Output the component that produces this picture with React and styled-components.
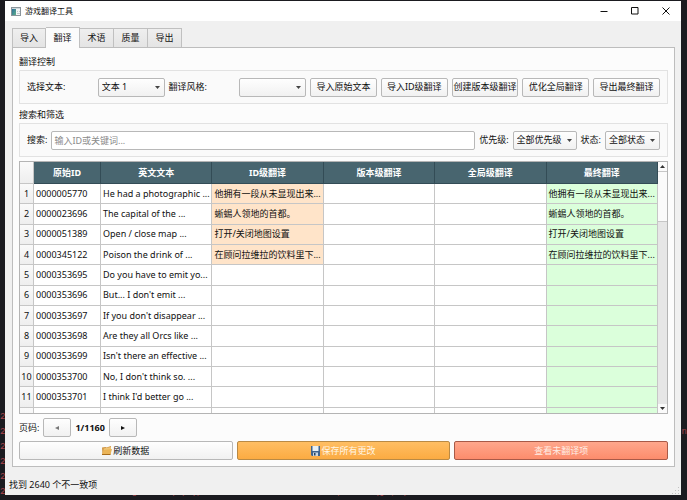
import React from 'react'
import styled, { createGlobalStyle, css } from 'styled-components';

const tabs = ['导入', '翻译', '术语', '质量', '导出'];

const actions = ['导入原始文本', '导入ID级翻译', '创建版本级翻译', '优化全局翻译', '导出最终翻译'];

const columns = ['原始ID', '英文文本', 'ID级翻译', '版本级翻译', '全局级翻译', '最终翻译'];

const rows = [
    { id: '0000005770', text: 'He had a photographic ...', translation: '他拥有一段从未显现出来...' },
    { id: '0000023696', text: 'The capital of the ...', translation: '蜥蜴人领地的首都。' },
    { id: '0000051389', text: 'Open / close map ...', translation: '打开/关闭地图设置' },
    { id: '0000345122', text: 'Poison the drink of ...', translation: '在顾问拉维拉的饮料里下...' },
    { id: '0000353695', text: 'Do you have to emit yo...' },
    { id: '0000353696', text: "But... I don't emit ..." },
    { id: '0000353697', text: "If you don't disappear ..." },
    { id: '0000353698', text: 'Are they all Orcs like ...' },
    { id: '0000353699', text: "Isn't there an effective ..." },
    { id: '0000353700', text: "No, I don't think so. ..." },
    { id: '0000353701', text: "I think I'd better go ..." },
    { id: '', text: '' },
];

const logLine = 'gotobusqu(a(,_200 - 10000 - 数据加载完毕, 3847 (jn, (4';

function App() {
    return (
        <DesktopStyled>
            <GlobalStyle />
            <LogStyled aria-hidden="true">
                <p>2</p>
                <p className="wide"><span>2</span><span>n</span></p>
                <p>2</p>
                <p>2</p>
                <p>2</p>
                <p className="last"><span>2</span><span>{logLine}</span></p>
            </LogStyled>
            <WindowStyled>
                <TitleBar>
                    <AppIcon />
                    <h1>游戏翻译工具</h1>
                    <WindowButton aria-label="最小化">
                        <svg viewBox="0 0 8 8"><path d="M.5 4.5h7" /></svg>
                    </WindowButton>
                    <WindowButton aria-label="最大化">
                        <svg viewBox="0 0 8 8"><path d="M.5 .5h6.500v6.500h-6.500z" /></svg>
                    </WindowButton>
                    <WindowButton aria-label="关闭">
                        <svg viewBox="0 0 8 8"><path d="M.5 .5l7 7M7.500 .5l-7 7" /></svg>
                    </WindowButton>
                </TitleBar>

                <TabBar role="tablist">
                    {tabs.map((tab) => (
                        <Tab key={tab} role="tab" aria-selected={tab === '翻译'} $active={tab === '翻译'}>{tab}</Tab>
                    ))}
                </TabBar>

                <Pane>
                    <GroupTitle>翻译控制</GroupTitle>
                    <ControlGroup>
                        <label htmlFor="text">选择文本:</label>
                        <SelectBox id="text" options={['文本 1']} />
                        <label htmlFor="style">翻译风格:</label>
                        <SelectBox id="style" options={['']} />
                        {actions.map((action) => (
                            <Button key={action}>{action}</Button>
                        ))}
                    </ControlGroup>

                    <GroupTitle>搜索和筛选</GroupTitle>
                    <FilterGroup>
                        <label htmlFor="search">搜索:</label>
                        <SearchInput id="search" type="text" placeholder="输入ID或关键词..." />
                        <label htmlFor="priority">优先级:</label>
                        <SelectBox id="priority" options={['全部优先级']} />
                        <label htmlFor="state">状态:</label>
                        <SelectBox id="state" options={['全部状态']} />
                    </FilterGroup>

                    <TableFrame>
                        <div className="view">
                            <Table>
                                <colgroup>
                                    <col className="num" />
                                    <col className="id" />
                                </colgroup>
                                <thead>
                                    <tr>
                                        <td></td>
                                        {columns.map((column) => <th key={column} scope="col">{column}</th>)}
                                    </tr>
                                </thead>
                                <tbody>
                                    {rows.map((row, index) => (
                                        <tr key={index}>
                                            <th scope="row">{row.id && index + 1}</th>
                                            <Cell>{row.id}</Cell>
                                            <Cell>{row.text}</Cell>
                                            <Cell $tone={row.translation && '#ffe4c9'}>{row.translation}</Cell>
                                            <Cell />
                                            <Cell />
                                            <Cell $tone="#dbffdb">{row.translation}</Cell>
                                        </tr>
                                    ))}
                                </tbody>
                            </Table>
                        </div>
                        <ScrollBar>
                            <button aria-label="向上滚动"><svg viewBox="0 0 5 3"><path d="M0 3L2.500 0L5 3z" /></svg></button>
                            <div className="track"><div className="thumb" /></div>
                            <button aria-label="向下滚动"><svg viewBox="0 0 5 3"><path d="M0 0L2.500 3L5 0z" /></svg></button>
                        </ScrollBar>
                    </TableFrame>

                    <Pager>
                        <span>页码:</span>
                        <PageButton aria-label="上一页" disabled>
                            <svg viewBox="0 0 4 4"><path d="M4 0L0 2L4 4z" /></svg>
                        </PageButton>
                        <strong>1/1160</strong>
                        <PageButton aria-label="下一页">
                            <svg viewBox="0 0 4 4"><path d="M0 0L4 2L0 4z" /></svg>
                        </PageButton>
                    </Pager>

                    <BottomActions>
                        <Button><FolderIcon />刷新数据</Button>
                        <Button $color="orange"><DiskIcon />保存所有更改</Button>
                        <Button $color="red">查看未翻译项</Button>
                    </BottomActions>
                </Pane>

                <StatusBar>
                    <span>找到 2640 个不一致项</span>
                    <SizeGrip />
                </StatusBar>
            </WindowStyled>
        </DesktopStyled>
    )
}

function SelectBox({ id, options }) {
    return (
        <SelectStyled>
            <select id={id}>
                {options.map((option) => <option key={option}>{option}</option>)}
            </select>
            <svg viewBox="0 0 5 3"><path d="M0 0L2.500 3L5 0z" /></svg>
        </SelectStyled>
    )
}

function AppIcon() {
    return (
        <svg width="10" height="9" viewBox="0 0 10 9">
            <defs>
                <linearGradient id="app" x1="0" y1="0" x2="1" y2="1">
                    <stop offset="0" stopColor="#2c6f9c" />
                    <stop offset="1" stopColor="#5fb08a" />
                </linearGradient>
            </defs>
            <rect x=".5" y=".5" width="9" height="8" fill="#f4f6f7" stroke="#8b959b" />
            <rect x="1" y="1" width="8" height="1" fill="#cfd8dc" />
            <rect x="1" y="2" width="4" height="6" fill="url(#app)" />
            <path d="M6 4.500h1M8 4.500h1M6 6.500h3" stroke="#c3cace" />
        </svg>
    )
}

function FolderIcon() {
    return (
        <svg width="10" height="9" viewBox="0 0 10 9">
            <path d="M0 1.500L3.500 1l1 .5L9 0v7L8 8.500H.5z" fill="#cf9440" />
            <path d="M1.500 2.500L9 1v4L2 6z" fill="#efc474" />
            <path d="M1.500 4L10 3L8.500 8.500H0z" fill="#eab458" />
            <path d="M0 8.500h8.500" stroke="#a86d1c" />
        </svg>
    )
}

function DiskIcon() {
    return (
        <svg width="9" height="10" viewBox="0 0 9 10">
            <path d="M0 0h9v10H1L0 9z" fill="#3f648f" />
            <rect x="1.500" y="0" width="6" height="5" fill="#e8f0f6" />
            <rect x="2" y="6.500" width="5" height="3.500" fill="#c9d6e2" />
            <rect x="3" y="7" width="1.500" height="2.500" fill="#27425f" />
        </svg>
    )
}

function SizeGrip() {
    return (
        <svg width="8" height="8" viewBox="0 0 8 8" fill="#c2c2c2">
            <path d="M6 0h1v1h-1zM6 3h1v1h-1zM3 3h1v1h-1zM6 6h1v1h-1zM3 6h1v1h-1zM0 6h1v1h-1z" />
        </svg>
    )
}

const GlobalStyle = createGlobalStyle`
    *{
        box-sizing: border-box;
    }

    body{
        margin: 0;
        background: #1b1b20;
        color: #101010;
        font-family: "Noto Sans", "Noto Sans CJK SC", sans-serif;
        font-size: 9px;
        line-height: 12px;
    }

    h1, h2, p{
        margin: 0;
        font-size: inherit;
        font-weight: 400;
    }

    button, input, select{
        font: inherit;
        color: inherit;
        margin: 0;
    }

    svg{
        flex: none;
        display: block;
    }
`;

const DesktopStyled = styled.div`
    position: relative;
    display: flex;
    min-height: 100vh;
    padding: 1px 6px 5px 5px;
    background: #1b1b20;
`;

const LogStyled = styled.div`
    position: absolute;
    inset: 0;
    display: flex;
    flex-direction: column;
    justify-content: flex-end;
    overflow: hidden;
    color: #a8434c;
    font-family: "Liberation Mono", "Noto Sans CJK SC", monospace;
    line-height: 15px;
    white-space: nowrap;

    .wide{
        display: flex;
        justify-content: space-between;
    }

    .last{
        display: flex;
        gap: 126px;
    }
`;

const WindowStyled = styled.main`
    position: relative;
    flex: 1;
    min-width: 0;
    display: flex;
    flex-direction: column;
    background: #f0f0f0;
`;

const TitleBar = styled.header`
    display: flex;
    align-items: center;
    height: 20px;
    padding-left: 6px;
    background: #fff;

    h1{
        flex: 1;
        margin-left: 4px;
        font-size: 8px;
    }
`;

const WindowButton = styled.button`
    display: flex;
    align-items: center;
    justify-content: center;
    width: 31px;
    height: 20px;
    padding: 0;
    border: 0;
    background: none;

    svg{
        width: 8px;
        height: 8px;
        fill: none;
        stroke: #111;
    }
`;

const TabBar = styled.nav`
    display: flex;
    align-items: flex-end;
    height: 26px;
    padding-left: 7px;
`;

const Tab = styled.button`
    width: 34px;
    height: 19px;
    padding: 0;
    border: 1px solid #c0c0c0;
    border-bottom: 0;
    border-left-width: 0;
    background: linear-gradient(#efefef, #e4e4e4);

    &:first-child{
        border-left-width: 1px;
    }

    ${({ $active }) => $active && css`
        height: 21px;
        margin-bottom: -1px;
        background: #fcfcfc;
        z-index: 1;
    `}
`;

const Pane = styled.section`
    flex: 1;
    display: flex;
    flex-direction: column;
    margin: 0 6px 0 7px;
    padding: 7px 6px 6px;
    border: 1px solid #bdbdbd;
    background: #fcfcfc;
`;

const GroupTitle = styled.h2`
    height: 15px;
    padding-top: 1px;
`;

const Group = styled.div`
    align-items: center;
    gap: 4px;
    height: 34px;
    padding: 0 7px;
    border: 1px solid #e2e2e2;
    background: #fafafa;
    margin-bottom: 4px;
`;

const ControlGroup = styled(Group)`
    display: grid;
    grid-template-columns: repeat(9, minmax(0, 1fr));
`;

const FilterGroup = styled(Group)`
    display: flex;
`;

const control = css`
    height: 19px;
    border: 1px solid #b8b8b8;
    border-radius: 2px;
    background: linear-gradient(#fefefe, #f1f1f1);
`;

const colors = {
    orange: css`
        border-color: #b98a45;
        background: linear-gradient(#ffbe63, #fbab42);
        color: #fff6e6;
    `,
    red: css`
        border-color: #a85a48;
        background: linear-gradient(#ffa78c, #fc8c6c);
        color: #ffeee6;
    `,
};

const Button = styled.button`
    ${control}
    display: flex;
    align-items: center;
    justify-content: center;
    gap: 1px;
    min-width: 0;
    padding: 0;
    white-space: nowrap;
    ${({ $color }) => colors[$color]}
`;

const SelectStyled = styled.div`
    position: relative;

    select{
        ${control}
        display: block;
        appearance: none;
        width: 100%;
        padding: 0 13px 0 3px;
    }

    svg{
        position: absolute;
        top: 8px;
        right: 5px;
        width: 5px;
        height: 3px;
        fill: #444;
        pointer-events: none;
    }
`;

const SearchInput = styled.input`
    flex: 1;
    min-width: 0;
    height: 19px;
    padding: 0 2px;
    border: 1px solid #b8b8b8;
    border-radius: 2px;
    background: #fff;

    &::placeholder{
        color: #8a8a8a;
    }
`;

const TableFrame = styled.div`
    flex: 1;
    display: flex;
    min-height: 200px;
    border: 1px solid #b4b4b4;
    background: #fff;

    .view{
        flex: 1;
        min-width: 0;
        height: 0;
        min-height: 100%;
        overflow: hidden;
    }
`;

const Table = styled.table`
    width: 100%;
    height: 266px;
    table-layout: fixed;
    border-collapse: separate;
    border-spacing: 0;

    .num{
        width: 14px;
    }

    .id{
        width: 67px;
    }

    th, td{
        padding: 0;
        border-right: 1px solid #c6c6c6;
        border-bottom: 1px solid #c6c6c6;
    }

    thead td, tbody th{
        background: linear-gradient(#fafafa, #eee);
        font-weight: 400;
    }

    thead tr{
        height: 22px;
    }

    tbody tr{
        height: 20px;
    }

    thead th{
        background: #48656f;
        border-color: #334c56;
        color: #fff;
        font-weight: 700;
    }
`;

const Cell = styled.td`
    && {
        padding: 0 2px;
    }
    overflow: hidden;
    white-space: nowrap;
    background: ${({ $tone }) => $tone || '#fff'};
`;

const ScrollBar = styled.div`
    display: flex;
    flex-direction: column;
    width: 9px;

    button{
        display: flex;
        align-items: center;
        justify-content: center;
        height: 9px;
        padding: 0;
        border: 0;
        background: #fafafa;
    }

    svg{
        width: 5px;
        height: 3px;
        fill: #333;
    }

    .track{
        flex: 1;
        background: #e6e6e6;
    }

    .thumb{
        height: 22%;
        border: 1px solid #c6c6c6;
        border-width: 1px 0;
        background: #fafafa;
    }
`;

const Pager = styled.div`
    display: flex;
    align-items: center;
    gap: 4px;
    height: 19px;
    margin: 4px 0;
`;

const PageButton = styled.button`
    ${control}
    display: flex;
    align-items: center;
    justify-content: center;
    width: 28px;
    padding: 0;

    svg{
        width: 4px;
        height: 4px;
        fill: #111;
    }

    &:disabled svg{
        fill: #777;
    }
`;

const BottomActions = styled.div`
    display: grid;
    grid-template-columns: repeat(3, minmax(0, 1fr));
    gap: 4px;
`;

const StatusBar = styled.footer`
    display: flex;
    align-items: center;
    justify-content: space-between;
    height: 28px;
    padding: 8px 1px 0 4px;

    svg{
        align-self: flex-end;
    }
`;

export default App;
